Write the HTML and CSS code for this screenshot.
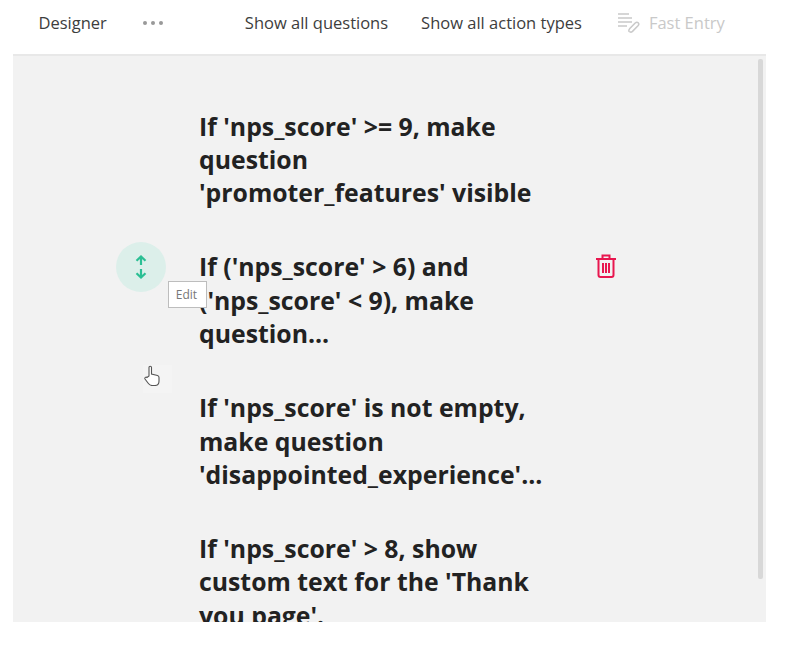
FILE: index.html
```html
<!DOCTYPE html>
<html lang="en">
<head>
    <meta charset="UTF-8">
    <meta name="viewport" content="width=device-width, initial-scale=1.0">
    <title>Designer logic</title>
    <link rel="stylesheet" href="styles.css">
</head>
<body>
    <div class="toolbar">
        <span class="tool-title">Designer</span>
        <span class="tool-dots"><i></i><i></i><i></i></span>
        <span class="tool-link first">Show all questions</span>
        <span class="tool-link">Show all action types</span>
        <span class="tool-fast">
            <svg width="25" height="24" viewBox="0 0 25 24" fill="none" stroke="#c9c9c9" stroke-width="1.5">
                <path d="M1 3h11M1 7h14M1 11h14M1 15h9"/>
                <path d="M12 20.5c-.6-1 0-2 .8-2.9l5.4-5.6c1-.9 2.2-1 3-.2s.7 2 -.2 3l-5.5 5.6c-.9.8-2.2 1-3.5.1z"/>
            </svg>
            Fast Entry
        </span>
    </div>

    <div class="panel">
        <div class="scrollbar"></div>

        <div class="rule">If 'nps_score' &gt;= 9, make question 'promoter_features' visible</div>

        <div class="rule">
            <div class="handle">
                <svg width="12" height="24" viewBox="0 0 12 24" fill="none" stroke="#2bbf94" stroke-width="2.2">
                    <path d="M6 1.500v8.500M1.500 5.800l4.500-4.300 4.500 4.300"/>
                    <path d="M6 14v8.500M1.500 18.200l4.500 4.300 4.500-4.300"/>
                </svg>
            </div>
            <div class="tip">Edit</div>
            <svg class="trash" width="22" height="24" viewBox="0 0 22 24" fill="none" stroke="#e8174f" stroke-width="2">
                <path d="M1 5h20M7.500 5V1.500h7V5"/>
                <path d="M3.500 5v16a2 2 0 0 0 2 2h11a2 2 0 0 0 2-2V5z"/>
                <path d="M8 9v10M11 9v10M14 9v10"/>
            </svg>
            If ('nps_score' &gt; 6) and ('nps_score' &lt; 9), make question...
            <div class="cursor">
                <svg width="16" height="21" viewBox="0 0 16 21" fill="#fff" stroke="#555" stroke-width="1.1">
                    <path d="M5 11V2.500a1.200 1.200 0 0 1 2.500 0V9l6 1.500c1 .3 1.500 1 1.500 2v3.500c0 2.500-1.500 4.500-4 4.500H8c-2 0-3-1-4-2.500L1 14c-.7-1.200 1-2.500 2-1.500z"/>
                </svg>
            </div>
        </div>

        <div class="rule">If 'nps_score' is not empty, make question 'disappointed_experience'...</div>

        <div class="rule">If 'nps_score' &gt; 8, show custom text for the 'Thank you page'.</div>
    </div>
</body>
</html>
```

FILE: styles.css
```css
html, body {
    margin: 0;
    padding: 0;
    background-color: #ffffff;
}

body {
    font-family: 'Open Sans', sans-serif;
    color: #222;
    height: 645px;
    overflow: hidden;
}

.toolbar {
    display: flex;
    align-items: center;
    height: 45px;
    margin-left: 13px;
    width: 753px;
    font-size: 16.500px;
    color: #3d3d3d;
}

.tool-title {
    margin-left: 25.500px;
}

.tool-dots {
    display: flex;
    gap: 4px;
    margin-left: 36px;
}

.tool-dots i {
    width: 4px;
    height: 4px;
    border-radius: 50%;
    background-color: #999;
}

.tool-link.first {
    margin-left: 82px;
}

.tool-link {
    margin-right: 33px;
}

.tool-fast {
    display: flex;
    align-items: center;
    gap: 7px;
    margin-left: 2px;
    color: #c9c9c9;
}

.panel {
    position: relative;
    height: 568px;
    width: 753px;
    margin-top: 9px;
    margin-left: 13px;
    padding: 53.500px 0 0 186px;
    box-sizing: border-box;
    background-color: #f2f2f2;
    border-top: 2px solid #e8e8e8;
    overflow: hidden;
}

.scrollbar {
    position: absolute;
    top: 3px;
    right: 3px;
    width: 5px;
    height: 520px;
    background-color: #d8d8d8;
    border-radius: 2px;
}

.rule {
    position: relative;
    width: 350px;
    font-size: 24.800px;
    line-height: 33.300px;
    font-weight: bold;
    color: #222;
    margin-bottom: 41px;
}

.handle {
    position: absolute;
    left: -83px;
    top: -8px;
    width: 50px;
    height: 50px;
    border-radius: 50%;
    background-color: #dcefea;
    display: flex;
    align-items: center;
    justify-content: center;
}

.tip {
    position: absolute;
    left: -31px;
    top: 31px;
    width: 35px;
    height: 25px;
    padding-right: 2px;
    background-color: #fff;
    border: 1px solid #bdbdbd;
    font-size: 12px;
    line-height: 25px;
    font-weight: normal;
    color: #777;
    text-align: center;
}

.trash {
    position: absolute;
    left: 396px;
    top: 4px;
}

.cursor {
    position: absolute;
    left: -56px;
    top: 115px;
    width: 29px;
    height: 28px;
    padding-left: 1px;
    box-sizing: border-box;
    background-color: #f4f4f4;
    display: flex;
    align-items: flex-start;
    justify-content: flex-start;
}
```
